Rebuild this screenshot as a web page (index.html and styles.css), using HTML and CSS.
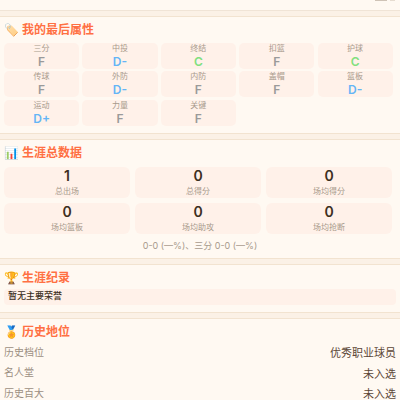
FILE: index.html
```html
<!DOCTYPE html>
<html lang="zh">
<head>
<meta charset="utf-8">
<title>我的最后属性</title>
<link rel="stylesheet" href="styles.css">
</head>
<body>
<div class="page">
  <div class="stub"><span class="sliver"></span><span class="sliver faint"></span></div>
  <section class="card attrs">
    <h2 class="title"><span class="ico">🏷️</span>我的最后属性</h2>
    <div class="attr-grid">
      <div class="attr"><div class="attr-name">三分</div><div class="grade f">F</div></div>
      <div class="attr"><div class="attr-name">中投</div><div class="grade d">D-</div></div>
      <div class="attr"><div class="attr-name">终结</div><div class="grade c">C</div></div>
      <div class="attr"><div class="attr-name">扣篮</div><div class="grade f">F</div></div>
      <div class="attr"><div class="attr-name">护球</div><div class="grade c">C</div></div>
      <div class="attr"><div class="attr-name">传球</div><div class="grade f">F</div></div>
      <div class="attr"><div class="attr-name">外防</div><div class="grade d">D-</div></div>
      <div class="attr"><div class="attr-name">内防</div><div class="grade f">F</div></div>
      <div class="attr"><div class="attr-name">盖帽</div><div class="grade f">F</div></div>
      <div class="attr"><div class="attr-name">篮板</div><div class="grade d">D-</div></div>
      <div class="attr"><div class="attr-name">运动</div><div class="grade d">D+</div></div>
      <div class="attr"><div class="attr-name">力量</div><div class="grade f">F</div></div>
      <div class="attr"><div class="attr-name">关键</div><div class="grade f">F</div></div>
    </div>
  </section>
  <section class="card totals">
    <h2 class="title"><span class="ico">📊</span>生涯总数据</h2>
    <div class="stat-grid">
      <div class="stat"><div class="num">1</div><div class="lbl">总出场</div></div>
      <div class="stat"><div class="num">0</div><div class="lbl">总得分</div></div>
      <div class="stat"><div class="num">0</div><div class="lbl">场均得分</div></div>
      <div class="stat"><div class="num">0</div><div class="lbl">场均篮板</div></div>
      <div class="stat"><div class="num">0</div><div class="lbl">场均助攻</div></div>
      <div class="stat"><div class="num">0</div><div class="lbl">场均抢断</div></div>
    </div>
    <p class="shoot">0-0 (—%)、三分 0-0 (—%)</p>
  </section>
  <section class="card records">
    <h2 class="title"><span class="ico">🏆</span>生涯纪录</h2>
    <div class="honor">暂无主要荣誉</div>
  </section>
  <section class="card legacy">
    <h2 class="title"><span class="ico">🏅</span>历史地位</h2>
    <div class="row"><span class="k">历史档位</span><span class="v">优秀职业球员</span></div>
    <div class="row"><span class="k">名人堂</span><span class="v">未入选</span></div>
    <div class="row"><span class="k">历史百大</span><span class="v">未入选</span></div>
  </section>
</div>
</body>
</html>
```
FILE: styles.css
```css
html, body { margin: 0; padding: 0; }
body {
  width: 400px; height: 400px; overflow: hidden;
  background: #fbf1e6;
  font-family: Inter, "Noto Sans CJK SC", sans-serif;
  color: #3d2f22;
}
.page { display: flex; flex-direction: column; gap: 5px; }
.stub {
  display: flex; justify-content: flex-end; align-items: flex-start; gap: 3px;
  height: 10px; padding-right: 5px;
  background: #fff9f2; border-bottom: 1px solid #f0e4d6;
}
.sliver { width: 12px; height: 1px; background: #cfc3b6; }
.sliver.faint { width: 5px; background: #e6dcd0; }
.card {
  box-sizing: border-box;
  background: #fff9f2;
  border-top: 1px solid #f2e3d0;
  border-bottom: 1px solid #f2e3d0;
  padding: 5px 4px 0;
}
.title {
  display: flex; align-items: center;
  margin: 0; height: 16px;
  font-size: 12px; line-height: 16px; font-weight: 600;
  color: #ff7043;
}
.ico { font-family: "Noto Color Emoji", sans-serif; font-size: 12px; width: 18px; font-weight: 400; }
.attrs { height: 118px; }
.attr-grid {
  display: grid; grid-template-columns: repeat(5, 75.2px); gap: 2.9px 3.2px;
  margin-top: 5px;
}
.attr {
  height: 25.6px; background: #fff1e9; border-radius: 5px;
  text-align: center;
}
.attr-name { font-size: 8px; line-height: 11px; color: #a89a8c; }
.grade { font-size: 12px; line-height: 14px; margin-top: 1px; font-weight: 600; }
.grade.f { color: #9a9a9a; }
.grade.d { color: #64b5f6; }
.grade.c { color: #81e07f; }
.totals { height: 120px; }
.stat-grid {
  display: grid; grid-template-columns: repeat(3, 126px); gap: 4.7px 5px;
  margin-top: 6px;
}
.stat {
  height: 31.3px; background: #fff1e9; border-radius: 6px;
  text-align: center;
}
.num { font-size: 14px; line-height: 17px; font-weight: 600; color: #3d2f22; }
.lbl { font-size: 8px; line-height: 12px; margin-top: 1px; color: #a89a8c; }
.shoot { margin: 6px 0 0; font-size: 9px; line-height: 12px; text-align: center; color: #a89a8c; }
.records { height: 49px; }
.honor {
  margin-top: 3px; height: 16px; background: #fff1e9; border-radius: 4px;
  padding: 0 4px; font-size: 9px; line-height: 13px; font-weight: 500; color: #3d2f22;
}
.legacy { border-bottom: 0; }
.legacy .title { margin-bottom: 1px; }
.row { display: flex; justify-content: space-between; align-items: center; height: 20.5px; font-size: 10px; }
.k { color: #9c8f82; }
.v { color: #5b4636; font-size: 11px; margin-top: 2px; }
```
